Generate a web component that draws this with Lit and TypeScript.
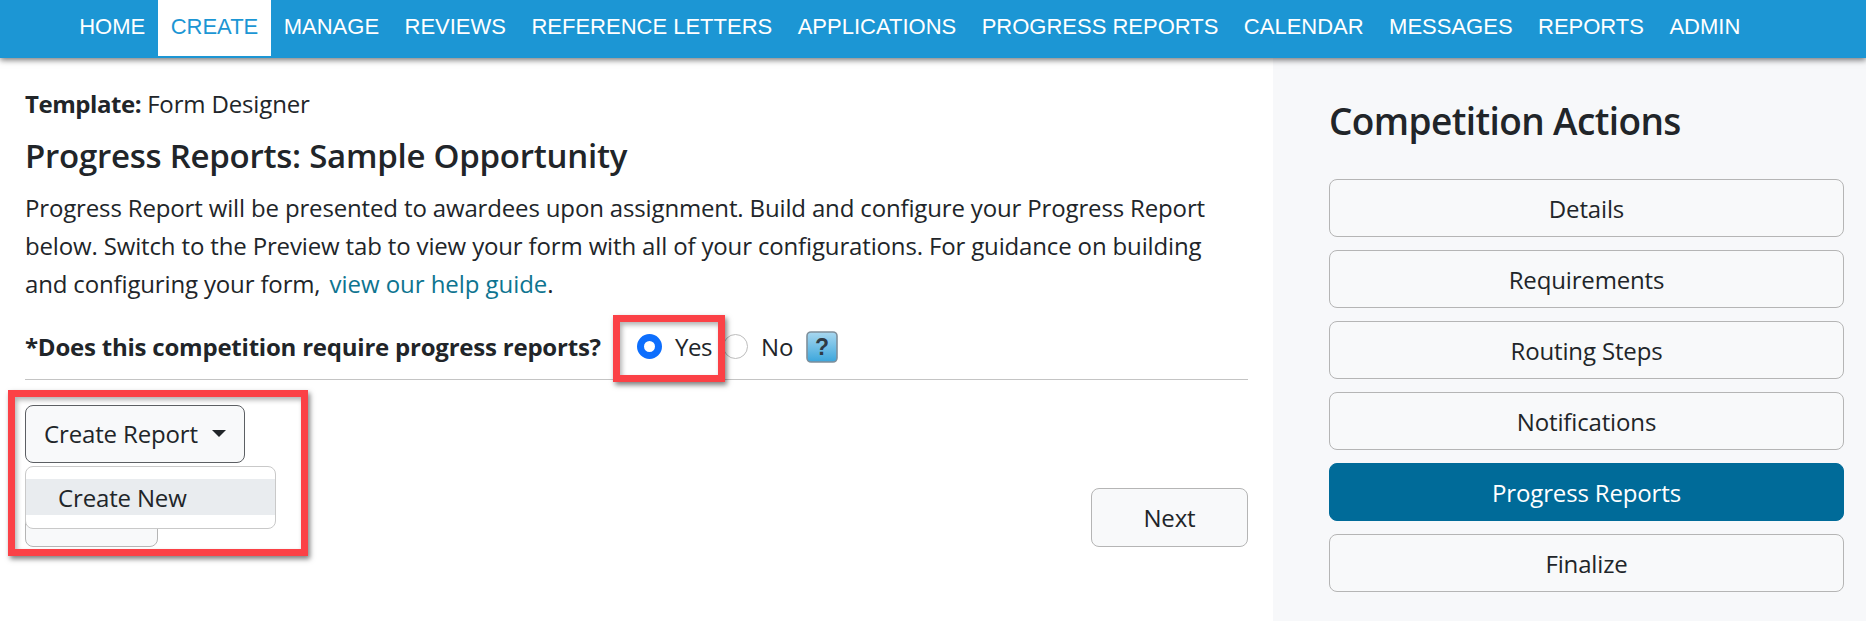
import { LitElement, html, css } from "lit";
import { customElement } from "lit/decorators.js";

const NAV = ["HOME","CREATE","MANAGE","REVIEWS","REFERENCE LETTERS","APPLICATIONS","PROGRESS REPORTS","CALENDAR","MESSAGES","REPORTS","ADMIN"];
const ACTIONS = ["Details","Requirements","Routing Steps","Notifications","Progress Reports","Finalize"];

@customElement("app-root")
export class AppRoot extends LitElement {
  static styles = css`
    :host { display: block; width: 1866px; height: 621px; overflow: hidden; position: relative; background: #fff;
      font-family: "Open Sans", "Noto Sans", sans-serif; color: #212529; font-size: 24px; letter-spacing: -0.15px; }
    * { box-sizing: border-box; }
    nav { height: 58px; background: #1c96d4; box-shadow: 0 2px 6px rgba(0,0,0,.55); display: flex; align-items: flex-start; padding-left: 66.5px; position: relative; z-index: 2;
      font-family: "Liberation Sans", Arial, sans-serif; font-size: 22px; letter-spacing: 0; }
    nav a { height: 56px; line-height: 53px; padding: 0 12.72px; color: #fff; white-space: nowrap; }
    nav a.active { background: #fff; color: #1c96d4; }
    .page { display: flex; height: 563px; }
    main { width: 1273px; padding: 30px 25px 0; flex: none; }
    aside { flex: 1; background: #f7f8fa; padding: 32px 22px 0 56px; }
    .tpl { line-height: 32px; height: 32px; }
    .tpl b { letter-spacing: -0.45px; }
    h1 { font-size: 33px; font-weight: 600; margin: 14px 0 0; line-height: 44px; letter-spacing: -0.25px; }
    p.desc { margin: 11px 0 0; line-height: 38px; width: 1210px; }
    a.link { color: #0e7490; text-decoration: none; margin-left: 3px; letter-spacing: -0.05px; }
    .q { display: flex; align-items: center; height: 59px; margin-top: 18px; border-bottom: 1px solid #c4c4c4; padding-bottom: 7px; width: 1223px; }
    .q b { font-weight: 700; width: 612px; letter-spacing: -0.22px; }
    .radio { width: 25px; height: 25px; border-radius: 50%; border: 1px solid #bdbdbd; background: #fff; flex: none; }
    .radio.on { border: 7.5px solid #0d6efd; }
    .lab-y { margin: 0 0 0 13px; width: 48px; letter-spacing: -0.5px; } .lab-n { margin-left: 13px; width: 45px; }
    .help { width: 32px; height: 32px; flex: none; }
    .btn { display: flex; align-items: center; justify-content: center; height: 58px; border: 1px solid #b5b5b5; border-radius: 8px; background: #f8f9fa; color: #212529; }
    .create { width: 220px; margin-top: 25px; border-color: #5c5f63; gap: 14px; padding-bottom: 2px; }
    .caret { width: 0; height: 0; border-left: 7px solid transparent; border-right: 7px solid transparent; border-top: 7px solid #212529; }
    .actions { display: flex; justify-content: space-between; margin-top: 25px; width: 1223px; }
    .back { width: 133px; height: 59px; }
    .next { width: 157px; height: 59px; }
    .menu { position: absolute; left: 25px; top: 466px; width: 251px; height: 63px; background: #fff; border: 1px solid #c9c9c9; border-radius: 8px; padding-top: 12px; z-index: 1; }
    .item { height: 36px; line-height: 38px; background: #e9ecef; padding-left: 32px; }
    .mark { position: absolute; border: 7px solid #fb4146; box-shadow: 2px 3px 5px rgba(0,0,0,.5), inset 2px 3px 5px rgba(0,0,0,.3); z-index: 3; }
    .m1 { left: 613px; top: 315px; width: 112px; height: 67px; }
    .m2 { left: 8px; top: 390px; width: 300px; height: 166px; }
    h2 { font-size: 37px; font-weight: 600; margin: 0 0 27px; line-height: 62px; letter-spacing: -0.6px; }
    .stack { display: flex; flex-direction: column; gap: 13px; }
    .stack .btn.on { background: #006b99; border-color: #006b99; color: #fff; }
  `;
  render() {
    return html`
      <nav>${NAV.map(n => html`<a class=${n === "CREATE" ? "active" : ""}>${n}</a>`)}</nav>
      <div class="page">
        <main>
          <div class="tpl"><b>Template:</b> Form Designer</div>
          <h1>Progress Reports: Sample Opportunity</h1>
          <p class="desc">Progress Report will be presented to awardees upon assignment. Build and configure your Progress Report below. Switch to the Preview tab to view your form with all of your configurations. For guidance on building and configuring your form, <a class="link">view our help guide</a>.</p>
          <div class="q">
            <b>*Does this competition require progress reports?</b>
            <span class="radio on"></span><span class="lab-y">Yes</span>
            <span class="radio"></span><span class="lab-n">No</span>
            <svg class="help" viewBox="0 0 32 32">
              <defs><linearGradient id="h" x1="0" y1="0" x2="0" y2="1"><stop offset="0" stop-color="#a9d8f0"/><stop offset="1" stop-color="#3ba6dc"/></linearGradient></defs>
              <rect x="1" y="1" width="30" height="30" rx="4" fill="url(#h)" stroke="#7f8f9b" stroke-width="1.6"/>
              <text x="16" y="24" text-anchor="middle" font-family="Liberation Sans" font-weight="700" font-size="23" fill="#2f3a44">?</text>
            </svg>
          </div>
          <div class="btn create">Create Report <span class="caret"></span></div>
          <div class="actions"><div class="btn back"></div><div class="btn next">Next</div></div>
        </main>
        <aside>
          <h2>Competition Actions</h2>
          <div class="stack">${ACTIONS.map(a => html`<div class="btn ${a === "Progress Reports" ? "on" : ""}">${a}</div>`)}</div>
        </aside>
      </div>
      <div class="menu"><div class="item">Create New</div></div>
      <div class="mark m1"></div>
      <div class="mark m2"></div>
    `;
  }
}
